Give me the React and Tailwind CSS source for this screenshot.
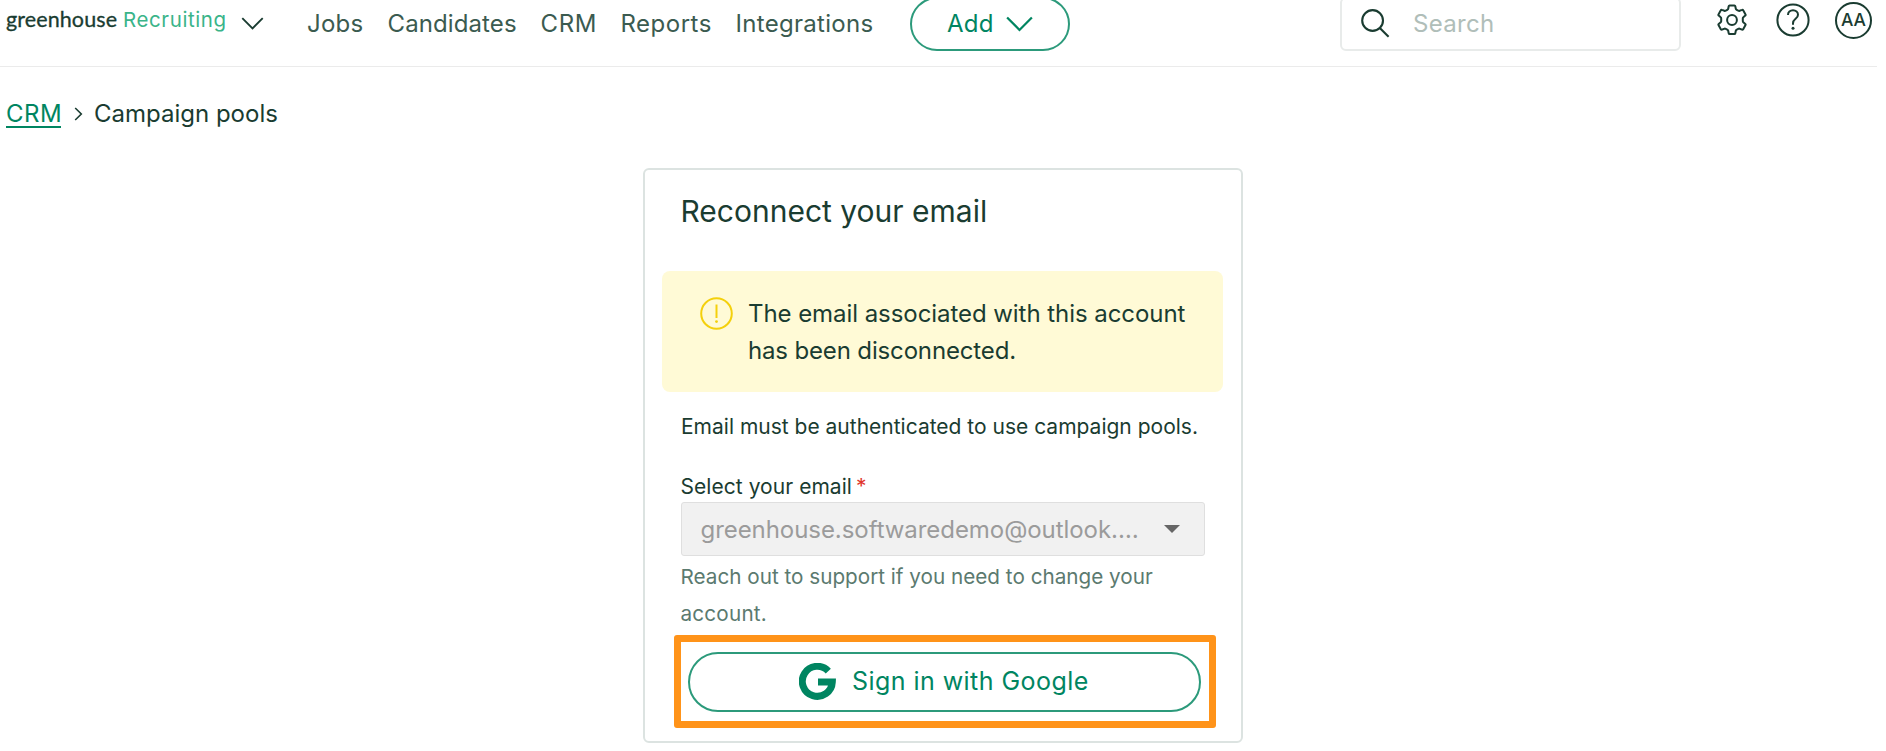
function Chevron({ className }) {
  return (
    <svg className={className} viewBox="0 0 24 14" fill="none" stroke="currentColor" strokeWidth="2">
      <path d="M1 1.2 12 12.3 23 1.2" />
    </svg>
  );
}

function SearchIcon() {
  return (
    <svg className="h-[29px] w-[29px] shrink-0" viewBox="0 0 29 29" fill="none" stroke="currentColor" strokeWidth="2.1">
      <circle cx="11.6" cy="11.5" r="10.4" />
      <path d="m18.8 19 8.8 8.8" />
    </svg>
  );
}

function GearIcon() {
  return (
    <svg className="h-[32px] w-[30px] shrink-0" viewBox="0 0 30 32" fill="none" stroke="currentColor" strokeWidth="2" strokeLinejoin="round">
      <path d="M12.6 1.4h4.8c.5 0 .8.3.9.8l.5 2.6c.1.5.4.8.9 1l1.6.9c.4.2.8.3 1.3.1l2.5-.9c.4-.2.9 0 1.1.4l2.3 4.1c.2.4.1.9-.2 1.2l-2 1.700c-.4.3-.5.7-.5 1.200v2.500c0 .5.1.900.5 1.200l2 1.700c.3.3.4.8.2 1.200l-2.300 4.100c-.2.4-.7.6-1.100.4l-2.500-.9c-.5-.2-.9-.1-1.300.1l-1.600.9c-.5.2-.8.5-.9 1l-.5 2.600c-.1.5-.4.8-.9.8h-4.800c-.5 0-.8-.3-.9-.8l-.5-2.600c-.1-.5-.4-.8-.9-1l-1.600-.9c-.4-.2-.8-.3-1.300-.1l-2.500.9c-.4.2-.9 0-1.100-.4l-2.300-4.100c-.2-.4-.1-.9.2-1.200l2-1.700c.4-.3.5-.7.5-1.200v-2.500c0-.5-.1-.9-.5-1.200l-2-1.700c-.3-.3-.4-.8-.2-1.200l2.300-4.100c.2-.4.7-.6 1.100-.4l2.500.9c.5.2.9.1 1.300-.1l1.600-.9c.5-.2.8-.5.9-1l.5-2.600c.1-.5.4-.8.9-.8Z" />
      <circle cx="15" cy="16" r="4.9" />
    </svg>
  );
}

function HelpIcon() {
  return (
    <svg className="h-[34px] w-[34px] shrink-0" viewBox="0 0 34 34" fill="none" stroke="currentColor" strokeWidth="2">
      <circle cx="17" cy="17" r="15.6" />
      <path d="M12 11.9c0-2.800 2.200-4.700 5-4.700s5 1.900 5 4.500c0 4.300-5 4-5 8.600v1.500" />
      <circle cx="17" cy="25.2" r="1.5" fill="currentColor" stroke="none" />
    </svg>
  );
}

function WarningIcon() {
  return (
    <svg className="mt-[1px] h-[33px] w-[33px] shrink-0 text-[#f4d00c]" viewBox="0 0 33 33" fill="none" stroke="currentColor" strokeWidth="2">
      <circle cx="16.5" cy="16.5" r="15.3" />
      <path d="M16.5 7.500v13.500" />
      <circle cx="16.5" cy="24.6" r="1.4" fill="currentColor" stroke="none" />
    </svg>
  );
}

function GoogleIcon() {
  return (
    <svg className="mb-[2px] h-[37px] w-[37px] shrink-0" viewBox="0 0 37 37" fill="none" stroke="currentColor" strokeWidth="7">
      <path d="M29.3 8.100A15 15 0 1 0 33.300 19H19" />
    </svg>
  );
}

export default function App() {
  return (
    <div className="h-[751px] w-full overflow-hidden bg-white font-['Inter','Liberation_Sans',sans-serif] text-[24px] whitespace-nowrap text-[#1a3c31]">
      <header className="h-[67px] w-[1877px] border-b border-[#ebebeb]">
        <div className="flex h-[47px] items-center">
          <div className="mb-[9px] flex w-[235px] shrink-0 items-baseline pl-[6px] leading-[24px]">
            <span className="w-[117px] font-['Lato',sans-serif] text-[21.5px] tracking-[0.1px] [-webkit-text-stroke:0.3px_currentColor]">greenhouse</span>
            <span className="text-[20.5px] tracking-[0.6px] text-[#3ab489]">Recruiting</span>
          </div>
          <Chevron className="ml-[6px] h-[13px] w-[23px]" />
          <nav className="mt-[1px] ml-[43px] flex text-[#3b5b50]">
            <a className="w-[80.5px] tracking-[0.2px]">Jobs</a>
            <a className="w-[153px] tracking-[0.1px]">Candidates</a>
            <a className="w-[80px] tracking-[0.6px]">CRM</a>
            <a className="w-[115px] tracking-[0.5px]">Reports</a>
            <a className="w-[174.5px] tracking-[0.3px]">Integrations</a>
          </nav>
          <button className="flex h-[54px] w-[160px] shrink-0 items-center rounded-full border-2 border-[#2c9a7b] pl-[35px] text-[#008561]">
            <span className="mt-[1px] w-[59px] text-left tracking-[0.3px]">Add</span>
            <Chevron className="h-[16px] w-[27px]" />
          </button>
          <div className="ml-[270px] flex h-[54px] w-[341px] shrink-0 items-center rounded-[6px] border-2 border-[#e8ebea] pl-[19px]">
            <SearchIcon />
            <span className="mt-[1px] ml-[23px] tracking-[0.3px] text-[#b0beb9]">Search</span>
          </div>
          <div className="mb-[7px] ml-[36px] flex items-center">
            <GearIcon />
            <div className="ml-[29px]">
              <HelpIcon />
            </div>
            <div className="ml-[25px] flex h-[37px] w-[37px] items-center justify-center rounded-full border-2 border-[#1a3c31] pt-[1px] text-[17.5px] font-medium">AA</div>
          </div>
        </div>
      </header>

      <div className="flex h-[101px] items-start pt-[29px] leading-[36px]">
        <a className="mt-[2px] ml-[6px] w-[55px] border-b-2 border-[#008561] leading-[32px] text-[#008561]">
          <span className="block h-[28px] tracking-[0.5px]">CRM</span>
        </a>
        <svg className="mt-[11px] ml-[13px] h-[14px] w-[9px]" viewBox="0 0 9 14" fill="none" stroke="currentColor" strokeWidth="1.6">
          <path d="m1.2 1 6.100 6-6.100 6" />
        </svg>
        <span className="ml-[11px] leading-[35px]">Campaign pools</span>
      </div>

      <main className="ml-[642.5px] h-[575px] w-[600px] rounded-[6px] border-2 border-[#dce3e1] px-[17.5px] pt-[21px]">
        <h1 className="ml-[18.5px] h-[40px] text-[30px] leading-[41px]">Reconnect your email</h1>

        <div className="mt-[40px] flex h-[121px] rounded-[8px] bg-[#fffad6] pt-[25px] pl-[38px]">
          <WarningIcon />
          <p className="ml-[15px] leading-[36.5px] tracking-[-0.06px]">
            The email associated with this account
            <br />
            <span className="tracking-[-0.15px]">has been disconnected.</span>
          </p>
        </div>

        <p className="mt-[20px] ml-[19px] text-[21px] leading-[30px]">Email must be authenticated to use campaign pools.</p>

        <div className="mt-[30px] ml-[18.5px] w-[524px]">
          <label className="block text-[21px] leading-[30px] tracking-[0.05px]">
            Select your email <span className="-ml-[2px] text-[#e0342b]">*</span>
          </label>
          <div className="flex h-[54px] items-center justify-between rounded-[3px] border border-[#dfdfdf] bg-[#f1f1f1] pr-[24px] pl-[19px] text-[#9b9b9b]">
            <span className="mt-[2px] tracking-[-0.06px]">greenhouse.softwaredemo@outlook.…</span>
            <svg className="h-[8px] w-[16px]" viewBox="0 0 16 8" fill="#666666">
              <path d="M0 0h16L8 8Z" />
            </svg>
          </div>
          <p className="mt-[3px] text-[20.7px] leading-[36.5px] text-[#5b7a6f]">
            Reach out to support if you need to change your
            <br />
            <span className="tracking-[0.2px]">account.</span>
          </p>
        </div>

        <div className="mt-[3px] ml-[12px] h-[93px] w-[542px] rounded-[3px] border-7 border-[#ff9319] pt-[10px] pl-[7px]">
          <button className="flex h-[60px] w-[513px] items-center rounded-full border-2 border-[#2c9a7b] pl-[109px] text-[25px] text-[#008561]">
            <GoogleIcon />
            <span className="ml-[16px] tracking-[0.45px]">Sign in with Google</span>
          </button>
        </div>
      </main>
    </div>
  );
}
